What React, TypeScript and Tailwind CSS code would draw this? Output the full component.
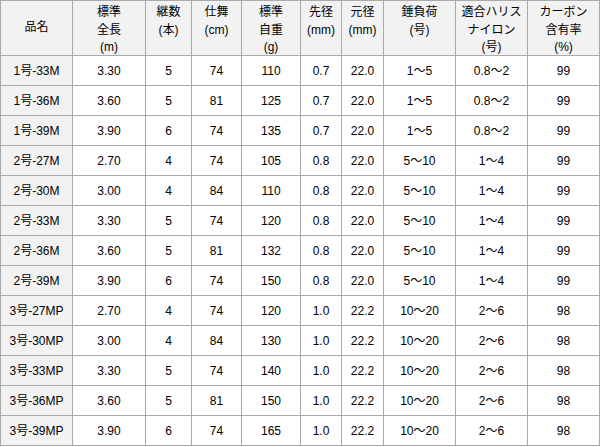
import React from 'react';

const headers: string[][] = [
  ['品名'],
  ['標準', '全長', '(m)'],
  ['継数', '(本)'],
  ['仕舞', '(cm)'],
  ['標準', '自重', '(g)'],
  ['先径', '(mm)'],
  ['元径', '(mm)'],
  ['錘負荷', '(号)'],
  ['適合ハリス', 'ナイロン', '(号)'],
  ['カーボン', '含有率', '(%)'],
];

const rows: string[][] = [
  ['1号-33M', '3.30', '5', '74', '110', '0.7', '22.0', '1～5', '0.8～2', '99'],
  ['1号-36M', '3.60', '5', '81', '125', '0.7', '22.0', '1～5', '0.8～2', '99'],
  ['1号-39M', '3.90', '6', '74', '135', '0.7', '22.0', '1～5', '0.8～2', '99'],
  ['2号-27M', '2.70', '4', '74', '105', '0.8', '22.0', '5～10', '1～4', '99'],
  ['2号-30M', '3.00', '4', '84', '110', '0.8', '22.0', '5～10', '1～4', '99'],
  ['2号-33M', '3.30', '5', '74', '120', '0.8', '22.0', '5～10', '1～4', '99'],
  ['2号-36M', '3.60', '5', '81', '132', '0.8', '22.0', '5～10', '1～4', '99'],
  ['2号-39M', '3.90', '6', '74', '150', '0.8', '22.0', '5～10', '1～4', '99'],
  ['3号-27MP', '2.70', '4', '74', '120', '1.0', '22.2', '10～20', '2～6', '98'],
  ['3号-30MP', '3.00', '4', '84', '130', '1.0', '22.2', '10～20', '2～6', '98'],
  ['3号-33MP', '3.30', '5', '74', '140', '1.0', '22.2', '10～20', '2～6', '98'],
  ['3号-36MP', '3.60', '5', '81', '150', '1.0', '22.2', '10～20', '2～6', '98'],
  ['3号-39MP', '3.90', '6', '74', '165', '1.0', '22.2', '10～20', '2～6', '98'],
];

export default function App() {
  return (
    <div className="w-[600px] bg-white font-['Liberation_Sans','Noto_Sans_CJK_JP',sans-serif] text-[12px] text-black">
      <div className="grid grid-cols-[71px_72px_45px_49px_58px_40px_41px_71px_71px_71px] grid-rows-[54px_repeat(13,29px)] gap-px bg-[#aaaaaa] p-px">
        {/* Header */}
        {headers.map((lines, i) => (
          <div
            key={`h${i}`}
            className={`flex flex-col items-center bg-[#f2f2f2] leading-[17.5px] ${
              lines.length === 1 ? 'justify-center' : 'justify-start pt-[3px]'
            }`}
          >
            {lines.map((l, j) => (
              <span key={j}>{l}</span>
            ))}
          </div>
        ))}

        {/* Body */}
        {rows.map((row, r) =>
          row.map((cell, c) => (
            <div
              key={`${r}-${c}`}
              className={`flex items-center justify-center ${c === 0 ? 'bg-[#f2f2f2]' : 'bg-white'}`}
            >
              {cell}
            </div>
          ))
        )}
      </div>
    </div>
  );
}
